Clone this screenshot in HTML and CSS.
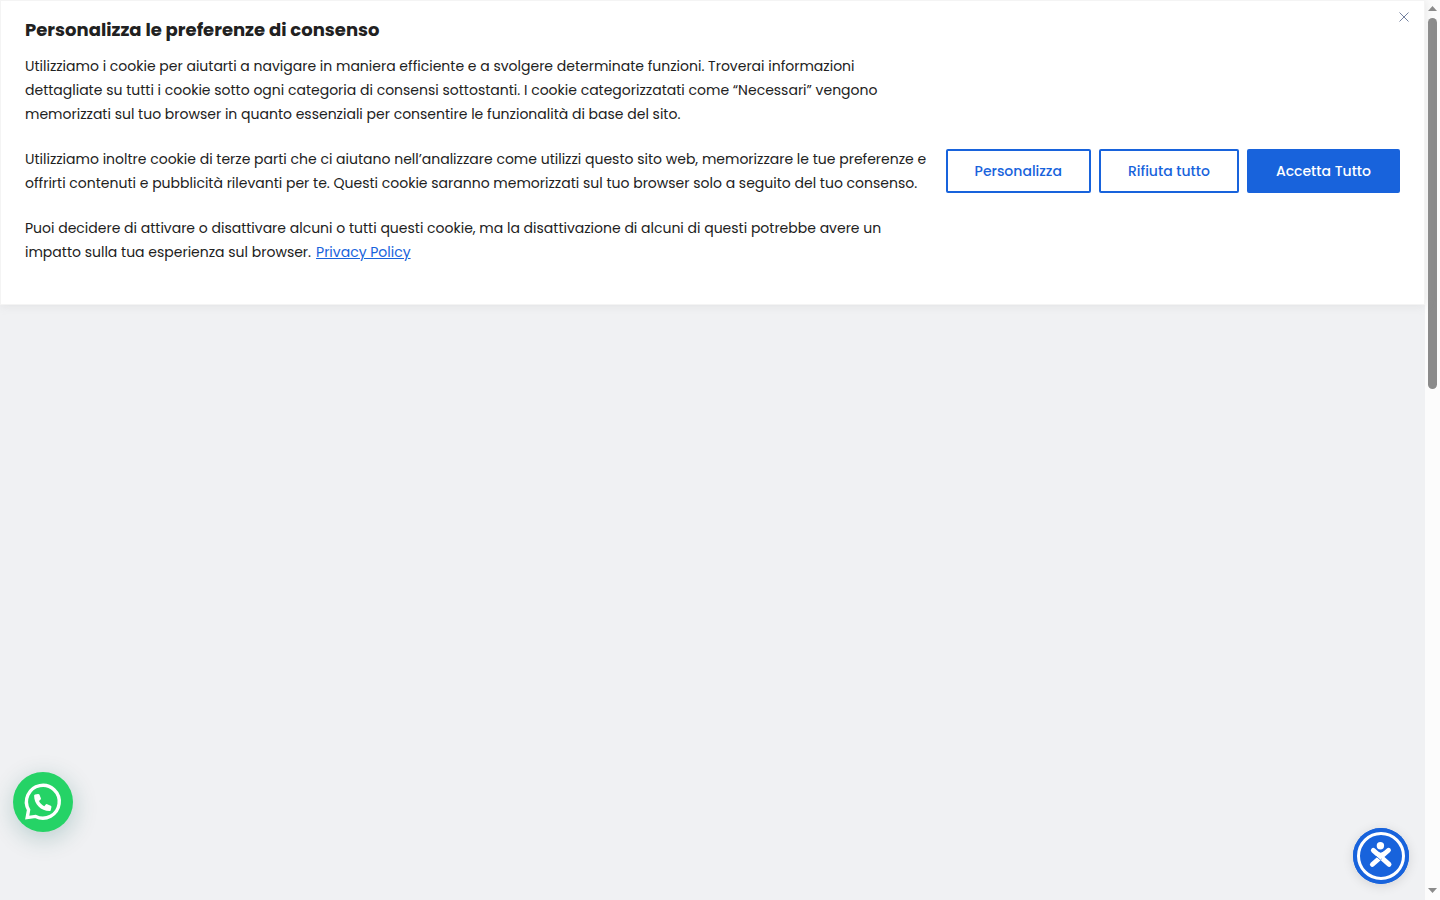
FILE: index.html
```html
<!DOCTYPE html>
<html lang="it">
<head>
<meta charset="utf-8">
<meta name="viewport" content="width=device-width, initial-scale=1">
<title>Preferenze di consenso</title>
<link rel="stylesheet" href="styles.css">
</head>
<body>
<div class="viewport">
  <main class="page">
    <section class="consent" aria-labelledby="consent-title">
      <button class="close" type="button" aria-label="Chiudi">
        <svg viewBox="0 0 10 10" width="10" height="10" aria-hidden="true"><path d="M0.500 0.500l9 9M9.500 0.500l-9 9"/></svg>
      </button>
      <h1 class="consent-title" id="consent-title">Personalizza le preferenze di consenso</h1>
      <div class="consent-body">
        <div class="consent-text">
          <p>Utilizziamo i cookie per aiutarti a navigare in maniera efficiente e a svolgere determinate funzioni. Troverai informazioni dettagliate su tutti i cookie sotto ogni categoria di consensi sottostanti. I cookie categorizzatati come “Necessari” vengono memorizzati sul tuo browser in quanto essenziali per consentire le funzionalità di base del sito.</p>
          <p>Utilizziamo inoltre cookie di terze parti che ci aiutano nell’analizzare come utilizzi questo sito web, memorizzare le tue preferenze e offrirti contenuti e pubblicità rilevanti per te. Questi cookie saranno memorizzati sul tuo browser solo a seguito del tuo consenso.</p>
          <p>Puoi decidere di attivare o disattivare alcuni o tutti questi cookie, ma la disattivazione di alcuni di questi potrebbe avere un impatto sulla tua esperienza sul browser.<a class="policy" href="#">Privacy Policy</a></p>
        </div>
        <div class="actions">
          <button class="btn" type="button">Personalizza</button>
          <button class="btn" type="button">Rifiuta tutto</button>
          <button class="btn btn-primary" type="button">Accetta Tutto</button>
        </div>
      </div>
    </section>
  </main>
  <div class="scrollbar" aria-hidden="true">
    <svg class="arrow" viewBox="0 0 9 5" width="9" height="5"><path d="M0 5L4.500 0L9 5z"/></svg>
    <div class="track"><div class="thumb"></div></div>
    <svg class="arrow" viewBox="0 0 9 5" width="9" height="5"><path d="M0 0L4.500 5L9 0z"/></svg>
  </div>
</div>
<button class="whatsapp" type="button" aria-label="WhatsApp">
  <svg viewBox="0 0 60 60" width="60" height="60" aria-hidden="true">
    <path d="M14.200 45.600L15.600 37.800A16.400 16.400 0 1 1 22.600 44.400Z" fill="none" stroke="#fff" stroke-width="3.400" stroke-linejoin="miter"/>
    <path d="M22 22.600l3-.7c.6-.1 1.200.2 1.400.7l1.500 3.600c.2.500.1 1.100-.3 1.400l-1.600 1.400c1.200 2.300 3 4.100 5.300 5.300l1.400-1.700c.4-.4.9-.6 1.500-.4l3.500 1.500c.6.300.9.900.7 1.500l-.7 3c-.1.500-.6.900-1.200.9-8.500 0-15.400-6.900-15.400-15.300 0-.6.300-1.100.9-1.200z" fill="#fff"/>
  </svg>
</button>
<button class="access" type="button" aria-label="Accessibilità">
  <svg viewBox="0 0 56 56" width="56" height="56" aria-hidden="true">
    <circle cx="28" cy="28" r="28" fill="#1863dc"/>
    <circle cx="28" cy="28" r="22.500" fill="none" stroke="#fff" stroke-width="3"/>
    <circle cx="27.400" cy="17.700" r="3.700" fill="#fff"/>
    <path d="M20.300 22.400l15.800 14M35.500 22.200L19.300 36.500" fill="none" stroke="#fff" stroke-width="4.800" stroke-linecap="round"/>
    <path d="M23.500 23.300l4.200 1.500 4.500-1.700-4.500 6z" fill="#fff"/>
    <path d="M23 28.200l4.400 3.800 1.200-1" fill="none" stroke="#1863dc" stroke-width=".8"/>
  </svg>
</button>
</body>
</html>
```
FILE: styles.css
```css
* { box-sizing: border-box; }

body {
  margin: 0;
  background: #f0f1f3;
  color: #212121;
  font-family: Poppins, Inter, sans-serif;
  font-size: 14px;
  line-height: 24px;
}

button { font: inherit; cursor: pointer; }

.viewport {
  display: grid;
  grid-template-columns: minmax(0, 1fr) 15px;
  min-height: 100vh;
}

.consent {
  position: relative;
  padding: 16px 24px;
  background: #fff;
  border: 1px solid #f4f4f4;
  box-shadow: 0 -1px 10px rgba(172, 171, 171, 0.3);
}

.consent-title {
  margin: 0 0 12px;
  font-size: 18px;
  font-weight: 700;
  line-height: 25px;
}

.consent-body {
  display: flex;
  align-items: center;
  justify-content: space-between;
  gap: 16px;
}

.consent-text {
  display: flex;
  flex-direction: column;
  gap: 21px;
  padding-bottom: 24px;
}

.consent-text p { margin: 0; }

.policy {
  display: inline-block;
  margin-left: 5px;
  color: #1863dc;
}

.actions {
  display: flex;
  flex-shrink: 0;
  gap: 8px;
}

.btn {
  padding: 8px 27px;
  border: 2px solid #1863dc;
  border-radius: 2px;
  background: transparent;
  color: #1863dc;
  font-weight: 500;
  white-space: nowrap;
}

.btn-primary {
  background: #1863dc;
  color: #fff;
}

.close {
  position: absolute;
  top: 11px;
  right: 15px;
  display: flex;
  padding: 0;
  border: 0;
  background: none;
}

.close path { stroke: #7482a0; stroke-width: 1; }

.scrollbar {
  display: flex;
  flex-direction: column;
  align-items: center;
  gap: 7px;
  padding: 6px 0 7px;
  background: #fcfcfc;
}

.arrow { fill: #8b8b8b; }

.track { flex: 1; width: 9px; }

.thumb {
  height: 43%;
  border-radius: 5px;
  background: #8b8b8b;
}

.whatsapp,
.access {
  position: fixed;
  display: flex;
  padding: 0;
  border: 0;
  border-radius: 50%;
}

.whatsapp {
  left: 13px;
  bottom: 68px;
  background: #25d366;
  box-shadow: 1px 6px 24px rgba(7, 94, 84, 0.24);
}

.access {
  right: 31px;
  bottom: 16px;
  background: #1863dc;
  box-shadow: 0 2px 12px rgba(0, 0, 0, 0.12);
}
```
